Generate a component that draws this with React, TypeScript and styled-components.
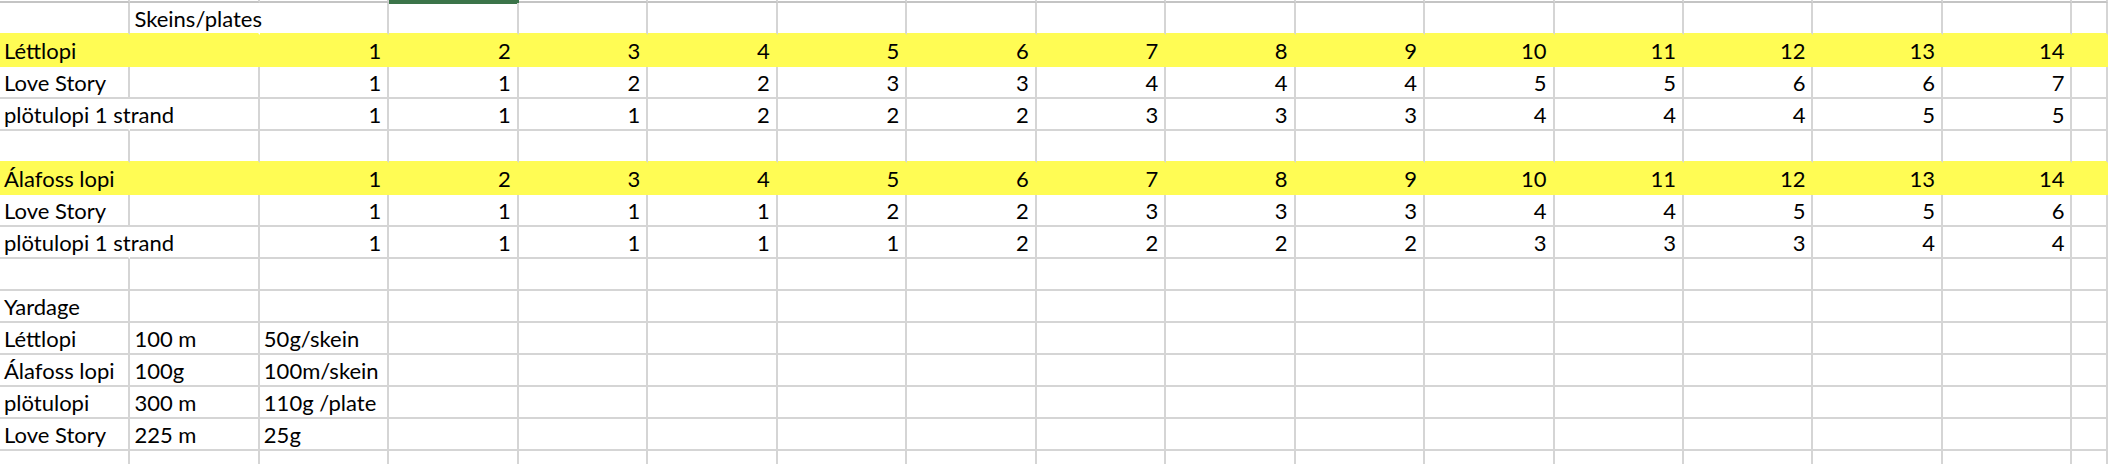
import React from 'react'
import styled, { createGlobalStyle, css } from 'styled-components'

const GlobalStyle = createGlobalStyle`
    html, body {
        margin : 0;
        padding : 0;
        background : #ffffff;
    }
    body {
        font-family : Lato, 'Liberation Sans', sans-serif;
        color : #000000;
    }
`

const GRID = '#d5d5d5'
const FILL = '#fffc54'
const COLUMNS = '130.4px repeat(15, 129.47px) 1fr'

const Sheet = styled.div`
    width : 2108px;
    height : 464px;
    overflow : hidden;
    background : #ffffff;
`

const TopEdge = styled.div`
    display : grid;
    grid-template-columns : ${COLUMNS};
    height : 3px;
`

const EdgeCell = styled.div<{ $active? : boolean }>`
    box-sizing : border-box;
    height : 3px;
    border-right : 2px solid ${GRID};
    border-bottom : 2px solid #c4c4c4;
    ${({ $active }) => $active && css`
        background : #3b7449;
        border-color : #3b7449;
        height : 4px;
    `}
`

const Row = styled.div<{ $fill? : boolean }>`
    display : grid;
    grid-template-columns : ${COLUMNS};
    height : 32px;
    background : ${({ $fill }) => $fill ? FILL : 'transparent'};
`

const Cell = styled.div<{ $right? : boolean, $fill? : boolean, $nextFill? : boolean, $spill? : boolean }>`
    box-sizing : border-box;
    height : 32px;
    display : flex;
    align-items : flex-end;
    justify-content : ${({ $right }) => $right ? 'flex-end' : 'flex-start'};
    padding : 0 6px 3px 4px;
    border-right : 2px solid ${({ $fill, $spill }) => $fill ? FILL : $spill ? 'transparent' : GRID};
    border-bottom : 2px solid ${({ $fill, $nextFill }) => ($fill || $nextFill) ? FILL : GRID};
    font-size : 22px;
    line-height : 1;
    white-space : nowrap;
    overflow : visible;
    min-width : 0;
`

type RowData = {
    cells : string[]
    fill? : boolean
    spill? : number[]
}

const series = (list : number[]) => list.map(String)
const head = Array.from({ length : 14 }, (_, i) => String(i + 1))

const rows : RowData[] = [
    { cells : ['', 'Skeins/plates'], spill : [1] },
    { cells : ['Léttlopi', '', ...head], fill : true },
    { cells : ['Love Story', '', ...series([1, 1, 2, 2, 3, 3, 4, 4, 4, 5, 5, 6, 6, 7])] },
    { cells : ['plötulopi 1 strand', '', ...series([1, 1, 1, 2, 2, 2, 3, 3, 3, 4, 4, 4, 5, 5])], spill : [0] },
    { cells : [] },
    { cells : ['Álafoss lopi', '', ...head], fill : true },
    { cells : ['Love Story', '', ...series([1, 1, 1, 1, 2, 2, 3, 3, 3, 4, 4, 5, 5, 6])] },
    { cells : ['plötulopi 1 strand', '', ...series([1, 1, 1, 1, 1, 2, 2, 2, 2, 3, 3, 3, 4, 4])], spill : [0] },
    { cells : [] },
    { cells : ['Yardage'] },
    { cells : ['Léttlopi', '100 m', '50g/skein'] },
    { cells : ['Álafoss lopi', '100g', '100m/skein'] },
    { cells : ['plötulopi', '300 m', '110g /plate'] },
    { cells : ['Love Story', '225 m', '25g'] },
    { cells : [] },
]

const COLUMN_COUNT = 17

const App = () => {
    return (
        <Sheet>
            <GlobalStyle />
            <TopEdge>
                {Array.from({ length : COLUMN_COUNT }, (_, i) => <EdgeCell key={i} $active={i === 3} />)}
            </TopEdge>
            {rows.map((row, r) => {
                const nextFill = !!rows[r + 1]?.fill
                return (
                    <Row key={r} $fill={row.fill}>
                        {Array.from({ length : COLUMN_COUNT }, (_, c) => {
                            const value = row.cells[c] || ''
                            const numeric = value !== '' && /^\d+$/.test(value)
                            return (
                                <Cell
                                    key={c}
                                    $right={numeric}
                                    $fill={row.fill}
                                    $nextFill={nextFill}
                                    $spill={row.spill?.includes(c)}
                                >
                                    {value}
                                </Cell>
                            )
                        })}
                    </Row>
                )
            })}
        </Sheet>
    )
}

export default App
